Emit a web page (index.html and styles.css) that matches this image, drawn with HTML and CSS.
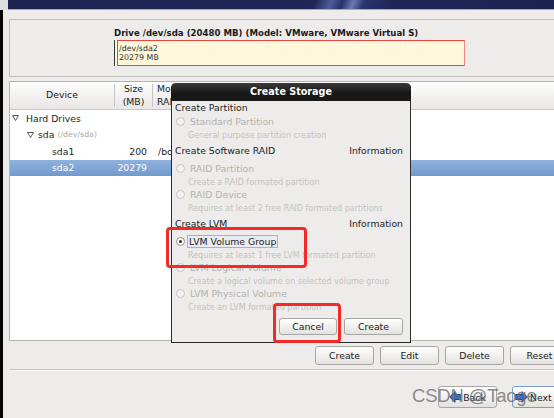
FILE: index.html
```html
<!DOCTYPE html>
<html>
<head>
<meta charset="utf-8">
<link rel="stylesheet" href="styles.css">
</head>
<body>
<div class="screen">
  <div class="topstrip"><div class="corner"></div><div class="navy"></div></div>
  <div class="work">
    <div class="edge"></div>
    <div class="main">
      <section class="drive">
        <div class="drive-title">Drive /dev/sda (20480 MB) (Model: VMware, VMware Virtual S)</div>
        <div class="map">
          <div class="seg1"></div>
          <div class="seg2"><span>/dev/sda2</span><span>20279 MB</span></div>
        </div>
      </section>
      <section class="tree">
        <div class="thead">
          <div class="th c-dev">Device</div>
          <div class="vsep"></div>
          <div class="th c-size">Size<br>(MB)</div>
          <div class="vsep"></div>
          <div class="th c-mnt">Mount Point/<br>RAID/Volume</div>
        </div>
        <div class="tr">
          <div class="td c-dev l0"><svg class="tri" width="7" height="6" viewBox="0 0 7 6"><path d="M0.5 0.5 H6.5 L3.5 5.5 Z" fill="#fff" stroke="#555" stroke-width="1"/></svg>Hard Drives</div>
        </div>
        <div class="tr">
          <div class="td c-dev l1"><svg class="tri" width="7" height="6" viewBox="0 0 7 6"><path d="M0.5 0.5 H6.5 L3.5 5.5 Z" fill="#fff" stroke="#555" stroke-width="1"/></svg>sda <span class="dim">(/dev/sda)</span></div>
        </div>
        <div class="tr">
          <div class="td c-dev l2">sda1</div>
          <div class="td c-sizev">200</div>
          <div class="td c-mntv">/boot</div>
        </div>
        <div class="tr sel">
          <div class="td c-dev l2">sda2</div>
          <div class="td c-sizev">20279</div>
          <div class="td c-mntv"></div>
        </div>
      </section>
      <div class="actions">
        <button class="btn">Create</button>
        <button class="btn">Edit</button>
        <button class="btn">Delete</button>
        <button class="btn">Reset</button>
      </div>
      <div class="rule"></div>
      <div class="nav">
        <button class="btn nb back"><svg width="12" height="12" viewBox="0 0 12 12"><path d="M0.7 6 L6 0.7 V3.5 H11.3 V8.5 H6 V11.3 Z" fill="#3d6ec6" stroke="#1d4790" stroke-width="1"/></svg>Back</button>
        <button class="btn nb next"><svg width="13" height="12" viewBox="0 0 13 12"><path d="M12.3 6 L7 0.7 V3.5 H0.7 V8.5 H7 V11.3 Z" fill="#3d6ec6" stroke="#1d4790" stroke-width="1"/></svg>Next</button>
      </div>
    </div>
  </div>

  <div class="dialog">
    <div class="dtitle">Create Storage</div>
    <div class="dbody">
      <div class="sec">Create Partition</div>
      <div class="opt off"><span class="radio"></span>Standard Partition</div>
      <div class="desc">General purpose partition creation</div>
      <div class="sec info"><span>Create Software RAID</span><span>Information</span></div>
      <div class="opt off"><span class="radio"></span>RAID Partition</div>
      <div class="desc">Create a RAID formated partition</div>
      <div class="opt off"><span class="radio"></span>RAID Device</div>
      <div class="desc">Requires at least 2 free RAID formated partitions</div>
      <div class="sec info"><span>Create LVM</span><span>Information</span></div>
      <div class="opt"><span class="radio on"></span><span class="focus">LVM Volume Group</span></div>
      <div class="desc">Requires at least 1 free LVM formated partition</div>
      <div class="opt off"><span class="radio"></span>LVM Logical Volume</div>
      <div class="desc">Create a logical volume on selected volume group</div>
      <div class="opt off"><span class="radio"></span>LVM Physical Volume</div>
      <div class="desc">Create an LVM formated partition</div>
      <div class="dbtns">
        <button class="btn dbtn cancel">Cancel</button>
        <button class="btn dbtn create">Create</button>
      </div>
    </div>
  </div>

  <div class="mark m1"></div>
  <div class="mark m2"></div>
  <div class="watermark">CSDN @Taoge</div>
</div>
</body>
</html>
```
FILE: styles.css
```css
* { box-sizing: border-box; }
html, body { margin: 0; padding: 0; }
body {
  width: 554px; height: 418px; overflow: hidden;
  background: #edeceb;
  font-family: "DejaVu Sans", "Noto Sans", sans-serif;
  font-size: 9.3px;
  color: #1c1c1c;
}
.screen { position: relative; width: 554px; height: 418px; overflow: hidden; background: #edeceb; }

.topstrip { display: flex; height: 10px; }
.corner { width: 8px; background: #dedede; }
.navy {
  flex: 1;
  background: linear-gradient(112deg, #1d2452 0%, #1f2756 56%, #4d5c9c 59%, #27306a 61%, #6a79b4 63%, #2a346e 65%, #1f2757 70%, #1c2350 100%);
  border-bottom: 1px solid #a7a9b8;
}

.work { display: flex; height: 408px; }
.edge { width: 3px; background: #050505; flex: none; }
.main { flex: none; width: 617px; padding: 9px 0 0 6px; display: flex; flex-direction: column; }

.drive {
  height: 58px;
  border: 1px solid #bdbbb6; border-right: none;
  padding: 7px 0 0 104px;
}
.drive-title { font-weight: bold; font-size: 8.6px; line-height: 12px; height: 12px; white-space: nowrap; color: #1a1a1a; }
.map { display: flex; margin-top: 1px; width: 351px; height: 26px; }
.seg1 { width: 3px; background: #fff8dd; border-left: 1px solid #333; }
.seg2 {
  flex: 1; display: flex; flex-direction: column;
  background: #fff7dc; border: 1px solid #e9453d; border-right-color: #f08a84;
  padding: 3px 0 0 1px;
  font-size: 7.9px; line-height: 9px; color: #333;
}

.tree {
  margin-top: 4px; height: 260px;
  border: 1px solid #b4b2ae; border-right: none;
  background: #fff;
}
.thead {
  display: flex; align-items: center;
  height: 28px; border-bottom: 1px solid #c9c7c3;
  background: linear-gradient(#fdfdfd, #e8e7e4);
}
.th { line-height: 12.5px; color: #222; }
.c-dev { width: 104px; text-align: center; flex: none; }
.c-size { width: 37px; text-align: center; flex: none; }
.c-mnt { padding-left: 4px; white-space: nowrap; }
.vsep { width: 1px; height: 23px; background: #c8c6c2; flex: none; }

.tr { display: flex; align-items: center; height: 16.5px; white-space: nowrap; }
.tr .c-dev { text-align: left; display: flex; align-items: center; }
.l0 { padding-left: 2px; }
.l1 { padding-left: 17px; }
.l2 { padding-left: 42px; }
.tri { margin-right: 7px; flex: none; }
.l1 .tri { margin-right: 4px; }
.dim { font-size: 7.8px; color: #a9a9a9; margin-left: 3px; }
.c-sizev { width: 38px; text-align: right; padding-right: 5px; flex: none; }
.c-mntv { padding-left: 6px; }
.tr.sel { background: linear-gradient(#8fb1dd, #7299cf); color: #fff; }

.btn {
  font: inherit; color: #1c1c1c;
  border: 1px solid #a8a6a2; border-radius: 3px;
  background: linear-gradient(#fefefe, #e3e2df);
  padding: 0; margin: 0;
  display: flex; align-items: center; justify-content: center;
}
.actions { display: flex; justify-content: flex-end; gap: 6px; margin-top: 5px; padding-right: 51px; height: 19px; }
.actions .btn { width: 59px; height: 19px; }
.rule { margin-top: 4px; height: 2px; border-top: 1px solid #c6c4c0; border-bottom: 1px solid #f7f7f6; }
.nav { display: flex; justify-content: flex-end; gap: 15px; margin-top: 15px; padding-right: 49px; }
.nb { width: 59px; height: 22px; gap: 2px; }
.nb.next { justify-content: flex-start; padding-left: 2px; border-color: #7c9dcc; }

.dialog {
  position: absolute; left: 171px; top: 83px; width: 240px; height: 260px;
  border: 1px solid #2b2b2b; border-top: none;
  border-radius: 5px 5px 0 0;
  background: #edeceb;
  display: flex; flex-direction: column;
}
.dtitle {
  height: 18px; margin: 0 -1px; flex: none;
  background: linear-gradient(#3a3a3a, #151515 60%, #1b1b1b);
  border-radius: 5px 5px 0 0;
  color: #fff; font-weight: bold; font-size: 9.6px;
  line-height: 18px; text-align: center;
}
.dbody { flex: 1; padding: 0 7px 7px 3px; display: flex; flex-direction: column; white-space: nowrap; }
.sec { height: 14px; line-height: 14px; color: #1c1c1c; }
.sec.info { height: 18px; line-height: 20px; margin-bottom: 3px; display: flex; justify-content: space-between; }
.opt { height: 13px; line-height: 13px; display: flex; align-items: center; padding-left: 1px; color: #1c1c1c; }
.opt.off { color: #b4b2ae; }
.desc { height: 13px; line-height: 15px; padding-left: 13px; font-size: 8px; color: #c4c2be; }
.radio {
  width: 9px; height: 9px; border-radius: 50%;
  border: 1px solid #c6c4c0; background: #f4f3f1;
  margin-right: 5px; flex: none;
  display: flex; align-items: center; justify-content: center;
}
.radio.on { border-color: #8e8c88; background: #fff; margin-right: 2px; }
.radio.on::after { content: ""; width: 3px; height: 3px; border-radius: 50%; background: #2a2a2a; }
.focus { border: 1px solid #a3b3cd; background: #e9edf3; padding: 0 1px; line-height: 11px; height: 13px; }
.dbtns { display: flex; justify-content: flex-end; gap: 7px; margin-top: 5px; }
.dbtn { height: 17px; }
.cancel { width: 58px; }
.create { width: 59px; }

.mark { position: absolute; border: 3px solid #f42a2a; border-radius: 4px; }
.m1 { left: 166px; top: 227px; width: 141px; height: 41px; }
.m2 { left: 273px; top: 303px; width: 68px; height: 40px; }

.watermark {
  position: absolute; left: 412px; top: 385px;
  font-family: "Liberation Sans", sans-serif; font-size: 18.5px;
  color: rgba(110,110,110,0.8);
  white-space: nowrap; letter-spacing: -0.2px;
}
```
